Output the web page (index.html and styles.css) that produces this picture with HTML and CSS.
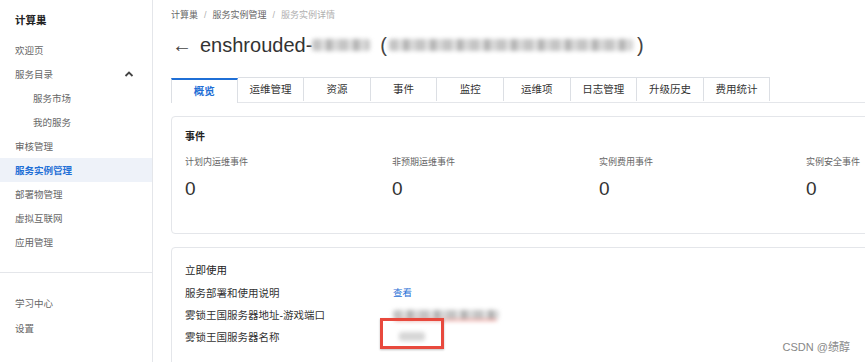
FILE: index.html
```html
<!DOCTYPE html>
<html lang="zh-CN">
<head>
    <meta charset="utf-8">
    <title>服务实例详情 - 计算巢</title>
    <link rel="stylesheet" href="styles.css">
</head>
<body>

<aside class="sidebar">
    <div class="brand">计算巢</div>

    <nav class="nav">
        <a class="nav-item">欢迎页</a>
        <a class="nav-item nav-group">
            <span>服务目录</span>
            <svg class="caret" width="10" height="6" viewBox="0 0 10 6" aria-hidden="true">
                <path d="M1.5 5 L5 1.5 L8.5 5" fill="none" stroke="#444" stroke-width="1.8"/>
            </svg>
        </a>
        <a class="nav-item sub">服务市场</a>
        <a class="nav-item sub">我的服务</a>
        <a class="nav-item">审核管理</a>
        <a class="nav-item active">服务实例管理</a>
        <a class="nav-item">部署物管理</a>
        <a class="nav-item">虚拟互联网</a>
        <a class="nav-item">应用管理</a>
    </nav>

    <hr class="nav-divider">

    <nav class="nav nav-bottom">
        <a class="nav-item">学习中心</a>
        <a class="nav-item">设置</a>
    </nav>
</aside>

<main class="main">
    <div class="breadcrumb">
        <span>计算巢</span>
        <span class="sep">/</span>
        <span>服务实例管理</span>
        <span class="sep">/</span>
        <span class="current">服务实例详情</span>
    </div>

    <h1 class="title">
        <span class="back">&larr;</span>
        <span>enshrouded-</span>
        <span class="masked" style="width: 58px"></span>
        <span class="paren">(</span>
        <span class="masked" style="width: 244px"></span>
        <span class="paren">)</span>
    </h1>

    <div class="tabs">
        <a class="tab active">概览</a>
        <a class="tab">运维管理</a>
        <a class="tab">资源</a>
        <a class="tab">事件</a>
        <a class="tab">监控</a>
        <a class="tab">运维项</a>
        <a class="tab">日志管理</a>
        <a class="tab">升级历史</a>
        <a class="tab">费用统计</a>
    </div>

    <section class="card">
        <h2 class="card-title small">事件</h2>
        <div class="stats">
            <div class="stat">
                <div class="stat-label">计划内运维事件</div>
                <div class="stat-value">0</div>
            </div>
            <div class="stat">
                <div class="stat-label">非预期运维事件</div>
                <div class="stat-value">0</div>
            </div>
            <div class="stat">
                <div class="stat-label">实例费用事件</div>
                <div class="stat-value">0</div>
            </div>
            <div class="stat">
                <div class="stat-label">实例安全事件</div>
                <div class="stat-value">0</div>
            </div>
        </div>
    </section>

    <section class="card">
        <h2 class="card-title">立即使用</h2>
        <div class="info">
            <div class="info-row">
                <div class="info-label">服务部署和使用说明</div>
                <div class="info-value"><a class="link">查看</a></div>
            </div>
            <div class="info-row">
                <div class="info-label">雾锁王国服务器地址-游戏端口</div>
                <div class="info-value">
                    <span class="masked underlined" style="width: 106px"></span>
                </div>
            </div>
            <div class="info-row">
                <div class="info-label">雾锁王国服务器名称</div>
                <div class="info-value marked">
                    <span class="masked light" style="width: 26px"></span>
                    <span class="mark-box"></span>
                </div>
            </div>
        </div>
    </section>
</main>

<div class="watermark">CSDN @绩醇</div>

</body>
</html>
```

FILE: styles.css
```css
:root {
    --border: #e4e6ea;
    --text: #333;
    --muted: #666;
    --blue: #1f6fd6;
    --cjk: "Liberation Sans", "Noto Sans CJK SC", sans-serif;
}

html, body {
    height: 100%;
}

body {
    margin: 0;
    display: flex;
    overflow: hidden;

    font-family: var(--cjk);
    font-size: 10px;
    color: var(--text);
    background: #fff;
}

a {
    text-decoration: none;
    cursor: pointer;
}

/* sidebar */

.sidebar {
    width: 152px;
    flex: none;
    border-right: 1px solid var(--border);
}

.brand {
    padding: 10px 15px 0;
    height: 28px;
    font-size: 10.5px;
    font-weight: bold;
    line-height: 20px;
    color: #222;
}

.nav {
    display: flex;
    flex-direction: column;
}

.nav-item {
    display: flex;
    align-items: center;
    justify-content: space-between;
    height: 24px;
    padding: 0 15px;
    font-size: 9.5px;
    color: #666;
}

.nav-item.sub {
    padding-left: 33px;
}

.nav-item.active {
    background: #eef2f9;
    color: var(--blue);
    font-weight: bold;
}

.caret {
    margin-right: 3px;
}

.nav-divider {
    margin: 18px 0 0;
    border: none;
    border-top: 1px solid var(--border);
}

.nav-bottom {
    padding-top: 17px;
}

.nav-bottom .nav-item {
    height: 25px;
}

/* main */

.main {
    flex: 1;
    min-width: 0;
    padding-left: 18px;
    overflow: hidden;
}

.breadcrumb {
    display: flex;
    gap: 6px;
    height: 18px;
    padding-top: 6px;
    font-size: 9px;
    line-height: 18px;
    color: #666;
}

.breadcrumb .sep,
.breadcrumb .current {
    color: #b0b0b0;
}

.title {
    display: flex;
    align-items: center;
    height: 34px;
    margin: 4px 0 15px;
    font-size: 20px;
    font-weight: normal;
    color: #333;
}

.back {
    width: 28px;
    margin-left: 1px;
    font-size: 20px;
    color: #444;
}

.paren {
    margin: 0 2px 0 10px;
    color: #444;
}

.paren + .masked + .paren {
    margin: 0 0 0 4px;
}

.masked {
    display: inline-block;
    height: 12px;
    border-radius: 3px;
    background: repeating-linear-gradient(90deg, #c4c4c4 0 9px, #e2e2e2 9px 14px, #b2b2b2 14px 20px, #d8d8d8 20px 27px);
    filter: blur(2px);
}

.masked.light {
    height: 9px;
    background: #d6d6d6;
}

.masked.underlined {
    height: 9px;
    box-shadow: 0 4px 0 -2px #f2a39d;
}

/* tabs */

.tabs {
    display: flex;
    width: 900px;
    border-bottom: 1px solid var(--border);
}

.tab {
    width: 66.6px;
    height: 24px;
    box-sizing: border-box;
    border: 1px solid #dcdfe4;
    border-left: none;
    border-bottom: none;

    font-size: 10.5px;
    line-height: 23px;
    text-align: center;
    color: #333;
}

.tab:first-child {
    border-left: 1px solid #dcdfe4;
}

.tab.active {
    position: relative;
    top: 1px;
    height: 25px;
    border-top: 2px solid var(--blue);
    background: #fff;
    color: var(--blue);
    font-weight: bold;
}

/* cards */

.card {
    width: 880px;
    margin-top: 13px;
    box-sizing: border-box;
    border: 1px solid var(--border);
    border-radius: 4px;
    padding: 10px 13px 0;
}

.card:first-of-type {
    height: 118px;
}

.card + .card {
    height: 130px;
    padding-top: 12px;
}

.card-title {
    margin: 0;
    font-size: 10.5px;
    font-weight: normal;
    line-height: 20px;
    color: #222;
}

.card-title.small {
    font-weight: bold;
    font-size: 10px;
}

.stats {
    display: grid;
    grid-template-columns: repeat(4, 207px);
    margin-top: 6px;
}

.stat-label {
    font-size: 9px;
    line-height: 18px;
    color: #666;
}

.stat-value {
    margin-top: 6px;
    font-size: 19px;
    line-height: 24px;
    color: #333;
}

.info {
    margin-top: 1px;
}

.info-row {
    display: grid;
    grid-template-columns: 208px 1fr;
    align-items: center;
    height: 22.3px;
}

.info-label {
    font-size: 10.5px;
    color: #333;
}

.info-value {
    display: flex;
    align-items: center;
}

.link {
    color: var(--blue);
    font-size: 9.5px;
}

.marked {
    position: relative;
    padding-left: 6px;
}

.mark-box {
    position: absolute;
    left: -13px;
    top: -14px;
    width: 64px;
    height: 31px;
    box-sizing: border-box;
    border: 3px solid #e8493d;
    box-shadow: 0 1px 2px rgba(0, 0, 0, 0.25);
}

.watermark {
    position: absolute;
    right: 15px;
    bottom: 8px;
    font-size: 11px;
    color: #888;
}
```
